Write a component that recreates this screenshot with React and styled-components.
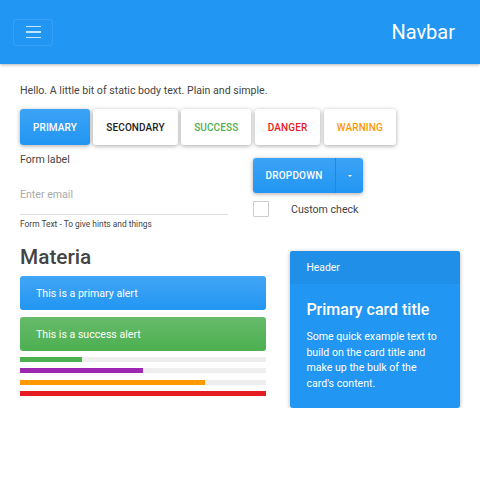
import React from 'react';
import styled, { createGlobalStyle } from 'styled-components';

const GlobalStyle = createGlobalStyle`
    html, body { margin: 0; padding: 0; background: #fff; }
    body { font-family: Roboto, "Liberation Sans", sans-serif; color: #444; }
`

const Navbar = styled.nav`
    height: 64px;
    background: #2196f3;
    box-shadow: 0 1px 3px rgba(0,0,0,0.3);
    display: flex;
    align-items: center;
    justify-content: space-between;
    padding: 0 25px 0 13px;
`

const Toggler = styled.button`
    width: 40px;
    height: 27px;
    border: 1px solid rgba(255,255,255,0.1);
    border-radius: 3px;
    background: transparent;
    display: flex;
    flex-direction: column;
    align-items: center;
    justify-content: center;
    gap: 4px;
    padding: 0;
    & span { display: block; width: 15px; height: 1.5px; background: rgba(255,255,255,0.75); }
`

const Brand = styled.div`
    color: #fff;
    font-size: 20px;
    font-weight: 400;
`

const Container = styled.main`
    padding: 20px 20px 0 20px;
`

const Lead = styled.p`
    margin: 0 0 11px 0;
    font-size: 10.6px;
    line-height: 14px;
    color: #444;
`

const ButtonRow = styled.div`
    display: flex;
    gap: 3.5px;
`

const colors = {
    primary: '#2196f3',
    secondary: '#222',
    success: '#4caf50',
    danger: '#e51c23',
    warning: '#ff9800',
    info: '#9c27b0',
}

const Button = styled.button`
    height: 36px;
    padding: 0 13px;
    border: none;
    border-radius: 3px;
    font-family: Roboto, sans-serif;
    font-size: 10px;
    font-weight: 500;
    letter-spacing: 0.1px;
    text-transform: uppercase;
    background: ${p => p.$filled ? 'linear-gradient(#3ca3f5, #2196f3)' : '#fff'};
    color: ${p => p.$filled ? '#fff' : colors[p.$variant]};
    box-shadow: 0 1px 4px rgba(0,0,0,0.35);
`

const FormRow = styled.div`
    display: flex;
    margin-top: 8px;
`

const LeftForm = styled.div`
    width: 208px;
`

const RightForm = styled.div`
    margin-left: 25px;
    padding-top: 5px;
`

const Label = styled.div`
    font-size: 10.6px;
    line-height: 13px;
    color: #444;
`

const Input = styled.input`
    display: block;
    width: 100%;
    box-sizing: border-box;
    margin-top: 9px;
    height: 40px;
    border: none;
    border-bottom: 1px solid #ddd;
    padding: 0;
    font-family: Roboto, sans-serif;
    font-size: 10.6px;
    outline: none;
    &::placeholder { color: #aaa; }
`

const Hint = styled.div`
    margin-top: 4px;
    font-size: 8.4px;
    color: #444;
`

const SplitGroup = styled.div`
    display: flex;
    border-radius: 3px;
    box-shadow: 0 1px 4px rgba(0,0,0,0.35);
    background: linear-gradient(#3ca3f5, #2196f3);
    height: 35px;
    width: 110px;
`

const SplitMain = styled.div`
    width: 83px;
    display: flex;
    align-items: center;
    justify-content: center;
    color: #fff;
    font-size: 10px;
    font-weight: 500;
    letter-spacing: 0.2px;
    border-right: 1px solid #1e88e5;
    box-sizing: border-box;
`

const SplitToggle = styled.div`
    flex: 1;
    display: flex;
    align-items: center;
    justify-content: center;
    &::after {
        content: '';
        border-top: 2.5px solid #fff;
        border-left: 2.5px solid transparent;
        border-right: 2.5px solid transparent;
    }
`

const CheckRow = styled.label`
    display: flex;
    align-items: center;
    margin-top: 8px;
    font-size: 10.6px;
    color: #444;
`

const CheckBox = styled.span`
    width: 14px;
    height: 14px;
    border: 1px solid #ccc;
    border-radius: 1px;
    margin-right: 22px;
`

const Bottom = styled.div`
    display: flex;
    align-items: flex-start;
    gap: 24px;
    margin-top: 8px;
`

const LeftCol = styled.div`
    width: 247px;
`

const Heading = styled.h1`
    margin: 7px 0 6px 0;
    font-size: 20.8px;
    font-weight: 500;
    line-height: 26px;
    color: #444;
`

const Alert = styled.div`
    height: 34px;
    border-radius: 3px;
    display: flex;
    align-items: center;
    padding-left: 16px;
    margin-bottom: 7px;
    font-size: 10.6px;
    color: #fff;
    background: ${p => p.$variant === 'success'
        ? 'linear-gradient(#66bb6a, #4caf50)'
        : 'linear-gradient(#42a5f5, #2196f3)'};
`

const Progress = styled.div`
    height: 5px;
    background: #eee;
    margin-top: ${p => p.$first ? 0 : 6.3}px;
    display: flex;
`

const Bar = styled.div`
    height: 100%;
    background: ${p => colors[p.$variant]};
`

const Bars = styled.div`
    margin-top: -1px;
`

const Card = styled.div`
    width: 170px;
    height: 157px;
    background: #2196f3;
    border-radius: 3px;
    box-shadow: 0 1px 4px rgba(0,0,0,0.3);
    color: #fff;
    margin-top: 14px;
    overflow: hidden;
`

const CardHeader = styled.div`
    height: 33px;
    background: #1f8fe8;
    display: flex;
    align-items: center;
    padding-left: 16px;
    font-size: 10.4px;
`

const CardBody = styled.div`
    padding: 15px 16px 0 16px;
`

const CardTitle = styled.h4`
    margin: 0 0 8px 0;
    font-size: 16px;
    font-weight: 500;
    line-height: 22px;
`

const CardText = styled.p`
    margin: 0;
    font-size: 10.6px;
    line-height: 15.5px;
`

export default function App() {
    return (
        <>
            <GlobalStyle />
            <Navbar>
                <Toggler><span /><span /><span /></Toggler>
                <Brand>Navbar</Brand>
            </Navbar>
            <Container>
                <Lead>Hello. A little bit of static body text. Plain and simple.</Lead>
                <ButtonRow>
                    <Button $filled $variant="primary">Primary</Button>
                    <Button $variant="secondary">Secondary</Button>
                    <Button $variant="success">Success</Button>
                    <Button $variant="danger">Danger</Button>
                    <Button $variant="warning">Warning</Button>
                </ButtonRow>
                <FormRow>
                    <LeftForm>
                        <Label>Form label</Label>
                        <Input placeholder="Enter email" />
                        <Hint>Form Text - To give hints and things</Hint>
                    </LeftForm>
                    <RightForm>
                        <SplitGroup>
                            <SplitMain>DROPDOWN</SplitMain>
                            <SplitToggle />
                        </SplitGroup>
                        <CheckRow>
                            <CheckBox />
                            Custom check
                        </CheckRow>
                    </RightForm>
                </FormRow>
                <Bottom>
                    <LeftCol>
                        <Heading>Materia</Heading>
                        <Alert $variant="primary">This is a primary alert</Alert>
                        <Alert $variant="success">This is a success alert</Alert>
                        <Bars>
                            <Progress $first><Bar $variant="success" style={{ width: '25%' }} /></Progress>
                            <Progress><Bar $variant="info" style={{ width: '50%' }} /></Progress>
                            <Progress><Bar $variant="warning" style={{ width: '75%' }} /></Progress>
                            <Progress><Bar $variant="danger" style={{ width: '100%' }} /></Progress>
                        </Bars>
                    </LeftCol>
                    <Card>
                        <CardHeader>Header</CardHeader>
                        <CardBody>
                            <CardTitle>Primary card title</CardTitle>
                            <CardText>Some quick example text to build on the card title and make up the bulk of the card's content.</CardText>
                        </CardBody>
                    </Card>
                </Bottom>
            </Container>
        </>
    );
}
